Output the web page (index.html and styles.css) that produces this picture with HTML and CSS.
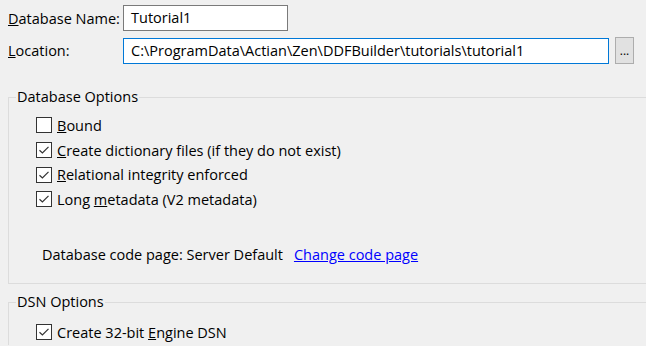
FILE: index.html
```html
<!DOCTYPE html>
<html>
<head>
<meta charset="utf-8">
<link rel="stylesheet" href="styles.css">
</head>
<body>
<div class="page">
  <div class="field-row">
    <label class="field-label"><u>D</u>atabase Name:</label>
    <div class="textbox name-box">Tutorial1</div>
  </div>
  <div class="field-row loc-row">
    <label class="field-label"><u>L</u>ocation:</label>
    <div class="textbox loc-box focused">C:\ProgramData\Actian\Zen\DDFBuilder\tutorials\tutorial1</div>
    <button class="browse">...</button>
  </div>

  <fieldset class="group db-group">
    <legend class="group-title">Database Options</legend>
    <div class="checks">
      <div class="check-row"><span class="cb"></span><span><u>B</u>ound</span></div>
      <div class="check-row"><span class="cb checked"><svg viewBox="0 0 16 16" width="16" height="16"><polyline points="3.5,8.2 6.4,11 12.5,4.8" fill="none" stroke="#333" stroke-width="1.2"/></svg></span><span><u>C</u>reate dictionary files (if they do not exist)</span></div>
      <div class="check-row"><span class="cb checked"><svg viewBox="0 0 16 16" width="16" height="16"><polyline points="3.5,8.2 6.4,11 12.5,4.8" fill="none" stroke="#333" stroke-width="1.2"/></svg></span><span><u>R</u>elational integrity enforced</span></div>
      <div class="check-row"><span class="cb checked"><svg viewBox="0 0 16 16" width="16" height="16"><polyline points="3.5,8.2 6.4,11 12.5,4.8" fill="none" stroke="#333" stroke-width="1.2"/></svg></span><span>Long <u>m</u>etadata (V2 metadata)</span></div>
    </div>
    <div class="codepage-row">
      <span>Database code page: Server Default</span>
      <a class="link" href="#">Change code page</a>
    </div>
  </fieldset>

  <fieldset class="group dsn-group">
    <legend class="group-title">DSN Options</legend>
    <div class="check-row"><span class="cb checked"><svg viewBox="0 0 16 16" width="16" height="16"><polyline points="3.5,8.2 6.4,11 12.5,4.8" fill="none" stroke="#333" stroke-width="1.2"/></svg></span><span>Create 32-bit <u>E</u>ngine DSN</span></div>
  </fieldset>
</div>
</body>
</html>
```

FILE: styles.css
```css
html, body {
  margin: 0;
  padding: 0;
  background: #f0f0f0;
  overflow: hidden;
}
body {
  font-family: "Open Sans", "Noto Sans", sans-serif;
  font-size: 14.5px;
  color: #000;
}
.page {
  padding: 5px 0 0 8px;
}
.field-row {
  display: flex;
  align-items: center;
  height: 26px;
}
.loc-row {
  margin-top: 6px;
  height: 27px;
}
.field-label {
  width: 115px;
  flex: none;
}
.textbox {
  box-sizing: border-box;
  height: 26px;
  background: #fff;
  border: 1px solid #7a7a7a;
  padding: 0 7px;
  line-height: 24px;
  white-space: nowrap;
  overflow: hidden;
}
.name-box {
  width: 165px;
}
.loc-box {
  width: 486px;
}
.focused {
  border-color: #0078d7;
}
.browse {
  margin-left: 6px;
  box-sizing: border-box;
  width: 19px;
  height: 27px;
  padding: 0;
  background: #e1e1e1;
  border: 1px solid #adadad;
  font: inherit;
  font-size: 12px;
  line-height: 24px;
  color: #000;
}
.group {
  margin: 0;
  padding: 0;
  border: 1px solid #dcdcdc;
  border-right: none;
  min-width: 0;
}
.db-group {
  margin-top: 23px;
  height: 197px;
  box-sizing: border-box;
}
.dsn-group {
  margin-top: 8px;
  height: 53px;
  border-bottom: none;
  box-sizing: border-box;
}
.group-title {
  margin-left: 7px;
  padding: 0 1px;
  line-height: 20px;
}
.checks {
  margin-top: 6px;
  padding-left: 27px;
}
.check-row {
  display: flex;
  align-items: center;
  height: 24.7px;
}
.dsn-group .check-row {
  margin-top: 8px;
  padding-left: 27px;
}
.cb {
  box-sizing: border-box;
  width: 16px;
  height: 16px;
  border: 1px solid #333;
  background: #fff;
  margin-right: 5px;
  flex: none;
  position: relative;
}
.cb svg {
  position: absolute;
  left: -1px;
  top: -1px;
}
.codepage-row {
  margin-top: 30px;
  padding-left: 33px;
  height: 25px;
  display: flex;
  align-items: center;
}
.link {
  margin-left: 11px;
  color: #0000ff;
  text-decoration: underline;
}
```
